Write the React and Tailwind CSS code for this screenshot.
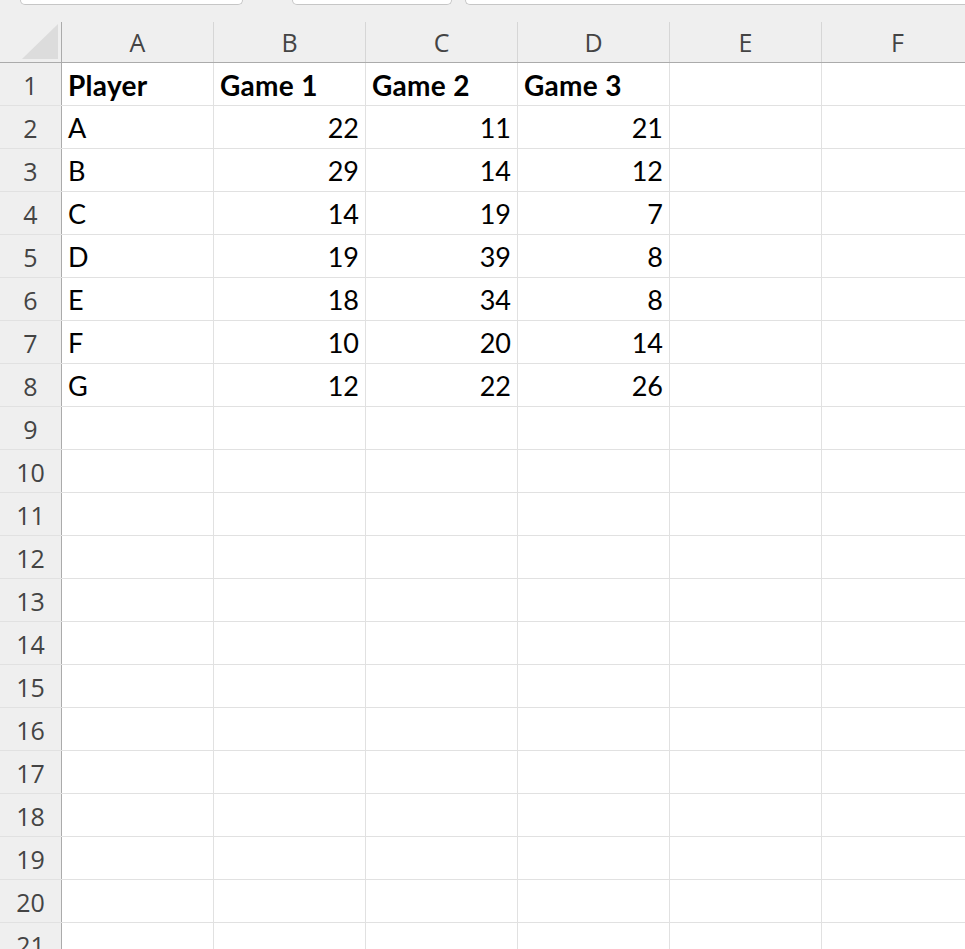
import React from "react";

const cols = ["A", "B", "C", "D", "E", "F"];

const data = [
  ["Player", "Game 1", "Game 2", "Game 3"],
  ["A", 22, 11, 21],
  ["B", 29, 14, 12],
  ["C", 14, 19, 7],
  ["D", 19, 39, 8],
  ["E", 18, 34, 8],
  ["F", 10, 20, 14],
  ["G", 12, 22, 26],
];

const rowCount = 21;

function Cell({ value, bold }) {
  const isNum = typeof value === "number";
  return (
    <div
      className={
        "w-[152px] shrink-0 h-full border-r border-[#e1e1e1] flex items-end pb-[4px] px-[6px] text-black leading-[32px] " +
        (isNum ? "justify-end " : "justify-start ") +
        (bold ? "font-bold text-[28px] tracking-[0.3px]" : "text-[27px]")
      }
    >
      {value}
    </div>
  );
}

export default function App() {
  const rows = [];
  for (let i = 0; i < rowCount; i++) {
    const r = data[i] || [];
    rows.push(
      <div key={i} className="flex h-[43px] border-b border-[#e1e1e1] shrink-0">
        <div className="w-[62px] shrink-0 h-full bg-[#efefef] border-r border-[#ababab] flex items-center justify-center text-[#444] text-[25px] pt-[4px] font-['Open_Sans',sans-serif]">
          {i + 1}
        </div>
        {cols.map((c, j) => (
          <Cell key={c} value={r[j] ?? ""} bold={i === 0} />
        ))}
      </div>
    );
  }

  return (
    <div className="w-[965px] h-[949px] overflow-hidden bg-white font-['Lato',sans-serif]">
      {/* tab strip */}
      <div className="h-[22px] bg-[#efefef] relative flex">
        <div className="ml-[20px] w-[223px] h-[5px] bg-white border border-t-0 border-[#c6c6c6] rounded-b-[8px]" />
        <div className="ml-[49px] w-[160px] h-[5px] bg-white border border-t-0 border-[#c6c6c6] rounded-b-[8px]" />
        <div className="ml-[13px] flex-1 h-[5px] bg-white border border-t-0 border-r-0 border-[#c6c6c6] rounded-bl-[8px]" />
      </div>
      {/* column headers */}
      <div className="flex h-[41px] bg-[#efefef] border-b border-[#ababab]">
        <div className="w-[62px] shrink-0 h-full border-r border-[#ababab] flex items-end justify-end pr-[3px] pb-[3px]">
          <svg width="36" height="35" viewBox="0 0 36 35">
            <polygon points="36,0 36,35 0,35" fill="#dcdcdc" />
          </svg>
        </div>
        {cols.map((c) => (
          <div
            key={c}
            className="w-[152px] shrink-0 h-full border-r border-[#d6d6d6] flex items-center justify-center text-[#444] text-[25px] pt-[2px] font-['Open_Sans',sans-serif]"
          >
            {c}
          </div>
        ))}
      </div>
      {rows}
    </div>
  );
}
